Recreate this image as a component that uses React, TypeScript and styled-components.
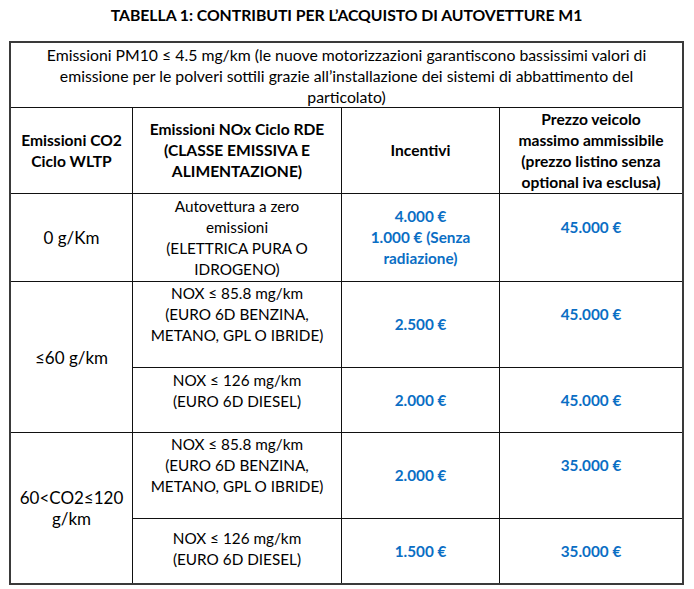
import * as React from "react";
import styled, { createGlobalStyle } from "styled-components";

const GlobalStyle = createGlobalStyle`
  html, body {
    margin: 0;
    padding: 0;
    background: #ffffff;
  }
  body {
    font-family: Lato, "Liberation Sans", sans-serif;
    color: #000000;
  }
`;

const Page = styled.div`
  width: 694px;
  height: 589px;
  padding: 0 10px 0 9px;
  box-sizing: border-box;
`;

const Title = styled.h1`
  margin: 0;
  height: 41px;
  padding-top: 5px;
  box-sizing: border-box;
  font-size: 15.8px;
  line-height: 20px;
  font-weight: 700;
  text-align: center;
  letter-spacing: -0.05px;
`;

const Grid = styled.div`
  display: grid;
  grid-template-columns: 121px 208px 157px 182px;
  grid-template-rows: 64px 85px 87px 85px 64px 85px 64px;
  gap: 1px;
  background: #111111;
  border: 2px solid #3a3a3a;
  width: max-content;
`;

const Cell = styled.div<{
  $span?: number;
  $wide?: boolean;
  $bold?: boolean;
  $blue?: boolean;
  $large?: boolean;
  $lift?: number;
}>`
  background: #ffffff;
  display: flex;
  flex-direction: column;
  align-items: center;
  justify-content: center;
  text-align: center;
  font-size: ${(p) => (p.$large ? "17px" : p.$wide ? "15.8px" : p.$bold ? "15.6px" : "15.3px")};
  line-height: 21px;
  padding: 0 2px ${(p) => p.$lift ?? 0}px;
  box-sizing: border-box;
  font-weight: ${(p) => (p.$bold || p.$blue ? 700 : 400)};
  color: ${(p) => (p.$blue ? "#0a6ec4" : "#000000")};
  white-space: nowrap;
  ${(p) => (p.$span ? `grid-row: span ${p.$span};` : "")}
  ${(p) => (p.$wide ? "grid-column: 1 / -1;" : "")}
`;

type Band = {
  co2: React.ReactNode;
  rows: { nox: React.ReactNode; noxLift?: number; incentive: React.ReactNode; price: string; priceLift?: number }[];
};

const bands: Band[] = [
  {
    co2: "0 g/Km",
    rows: [
      {
        nox: (
          <>
            Autovettura a zero
            <br />
            emissioni
            <br />
            (ELETTRICA PURA O
            <br />
            IDROGENO)
          </>
        ),
        incentive: (
          <>
            4.000 €
            <br />
            1.000 € (Senza
            <br />
            radiazione)
          </>
        ),
        price: "45.000 €",
        priceLift: 20,
      },
    ],
  },
  {
    co2: "≤60 g/km",
    rows: [
      {
        nox: (
          <>
            NOX ≤ 85.8 mg/km
            <br />
            (EURO 6D BENZINA,
            <br />
            METANO, GPL O IBRIDE)
          </>
        ),
        noxLift: 21,
        incentive: "2.500 €",
        price: "45.000 €",
        priceLift: 21,
      },
      {
        nox: (
          <>
            NOX ≤ 126 mg/km
            <br />
            (EURO 6D DIESEL)
          </>
        ),
        noxLift: 19,
        incentive: "2.000 €",
        price: "45.000 €",
      },
    ],
  },
  {
    co2: (
      <>
        60&lt;CO2≤120
        <br />
        g/km
      </>
    ),
    rows: [
      {
        nox: (
          <>
            NOX ≤ 85.8 mg/km
            <br />
            (EURO 6D BENZINA,
            <br />
            METANO, GPL O IBRIDE)
          </>
        ),
        noxLift: 21,
        incentive: "2.000 €",
        price: "35.000 €",
        priceLift: 21,
      },
      {
        nox: (
          <>
            NOX ≤ 126 mg/km
            <br />
            (EURO 6D DIESEL)
          </>
        ),
        noxLift: 4,
        incentive: "1.500 €",
        price: "35.000 €",
      },
    ],
  },
];

export default function App() {
  return (
    <>
      <GlobalStyle />
      <Page>
        <Title>TABELLA 1: CONTRIBUTI PER L’ACQUISTO DI AUTOVETTURE M1</Title>
        <Grid>
          <Cell $wide>
            <span>
              Emissioni PM10 ≤ 4.5 mg/km (le nuove motorizzazioni garantiscono bassissimi valori di
              <br />
              emissione per le polveri sottili grazie all’installazione dei sistemi di abbattimento del
              <br />
              particolato)
            </span>
          </Cell>

          <Cell $bold>
            <span>
              Emissioni CO2
              <br />
              Ciclo WLTP
            </span>
          </Cell>
          <Cell $bold>
            <span>
              Emissioni NOx Ciclo RDE
              <br />
              (CLASSE EMISSIVA E
              <br />
              ALIMENTAZIONE)
            </span>
          </Cell>
          <Cell $bold>Incentivi</Cell>
          <Cell $bold>
            <span>
              Prezzo veicolo
              <br />
              massimo ammissibile
              <br />
              (prezzo listino senza
              <br />
              optional iva esclusa)
            </span>
          </Cell>

          {bands.map((band, i) => (
            <React.Fragment key={i}>
              <Cell $span={band.rows.length} $large>
                <span>{band.co2}</span>
              </Cell>
              {band.rows.map((row, j) => (
                <React.Fragment key={j}>
                  <Cell $lift={row.noxLift}>
                    <span>{row.nox}</span>
                  </Cell>
                  <Cell $blue>
                    <span>{row.incentive}</span>
                  </Cell>
                  <Cell $blue $lift={row.priceLift}>
                    {row.price}
                  </Cell>
                </React.Fragment>
              ))}
            </React.Fragment>
          ))}
        </Grid>
      </Page>
    </>
  );
}
